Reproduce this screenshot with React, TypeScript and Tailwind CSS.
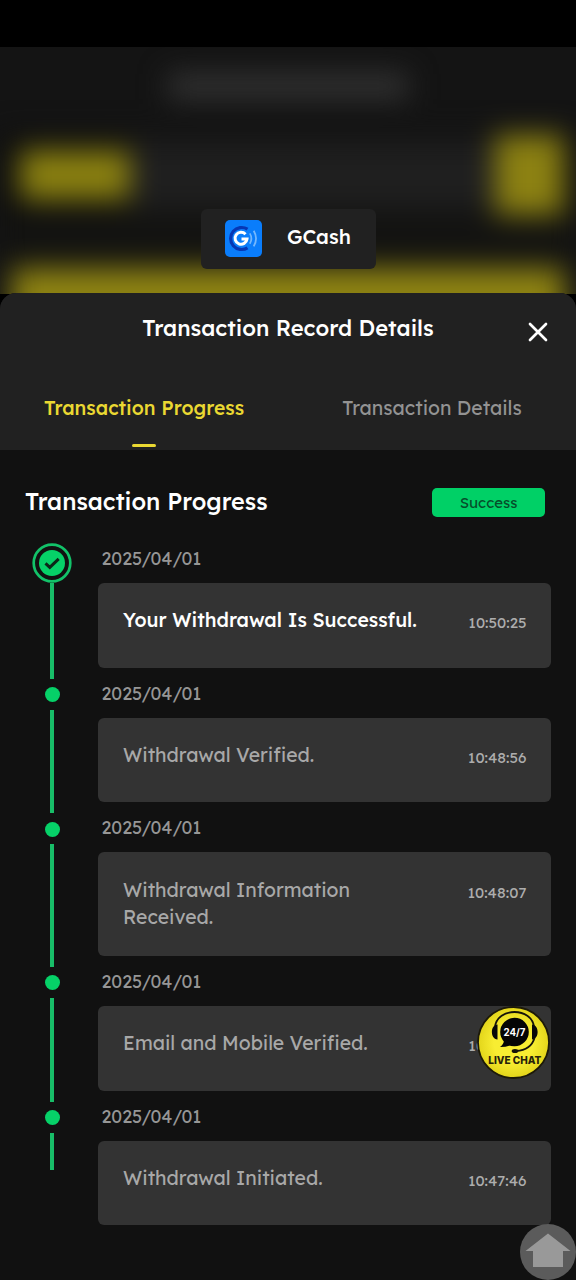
import { clsx } from "clsx";

interface ProgressStep {
  title: string;
  date: string;
  time: string;
}

const steps: ProgressStep[] = [
  { title: "Your Withdrawal Is Successful.", date: "2025/04/01", time: "10:50:25" },
  { title: "Withdrawal Verified.", date: "2025/04/01", time: "10:48:56" },
  { title: "Withdrawal Information Received.", date: "2025/04/01", time: "10:48:07" },
  { title: "Email and Mobile Verified.", date: "2025/04/01", time: "10:47:58" },
  { title: "Withdrawal Initiated.", date: "2025/04/01", time: "10:47:46" },
];

const GCashLogo = () => (
  <svg viewBox="0 0 37 37" className="-mt-[2px] h-[37px] w-[37px]">
    <rect width="37" height="37" rx="5" fill="#0a7dfb" />
    <path d="M22.5 9.2A11 11 0 1 0 22.5 27.8" fill="none" stroke="#0637b5" strokeWidth="3.2" />
    <path d="M20.5 14.2A6 6 0 1 0 22 19H16.5" fill="none" stroke="#fff" strokeWidth="3" />
    <path d="M24.8 13.4Q28 18.5 24.8 23.8" fill="none" stroke="#74b7fd" strokeWidth="1.7" />
    <path d="M28.7 10.8Q33.4 18.5 28.7 26.4" fill="none" stroke="#74b7fd" strokeWidth="1.8" />
  </svg>
);

const Backdrop = () => (
  <div className="h-[247px] overflow-hidden bg-[#141414]">
    <div className="-mx-5 flex h-[310px] flex-col px-5 blur-[14px]">
      <div className="flex h-[86px] items-center justify-center">
        <div className="-mt-2 h-[26px] w-[240px] bg-[#323232]" />
      </div>
      <div className="flex h-[84px] items-center bg-[#0e0e0e] pr-[12px] pl-[20px]">
        <div className="h-[50px] w-[110px] bg-[#8a8010]" />
        <div className="h-[70px] flex-1 bg-[#1f1f1f]" />
        <div className="h-[80px] w-[69px] bg-[#8c8112]" />
      </div>
      <div className="h-[51px] bg-[#131311]" />
      <div className="mx-[12px] h-[89px] bg-[#8e8312]" />
    </div>
  </div>
);

const StepMarker = ({ first, last }: { first: boolean; last: boolean }) => (
  <div className="flex w-10 shrink-0 flex-col items-center">
    {first ? (
      <svg viewBox="0 0 40 40" className="h-10 w-10 shrink-0">
        <circle cx="20" cy="20" r="18.3" fill="none" stroke="#12c269" strokeWidth="2.7" />
        <circle cx="20" cy="20" r="13" fill="#06d168" />
        <path d="M13.5 20.3L17.8 24.4L26.7 15.800" fill="none" stroke="#0b2718" strokeWidth="3" />
      </svg>
    ) : (
      <div className="flex h-[32px] shrink-0 items-center pt-[2px]">
        <div className="h-[15px] w-[15px] rounded-full bg-[#06d168]" />
      </div>
    )}
    <div className={clsx("w-[3.5px] bg-[#18bd68]", last ? "h-[37px]" : "-mb-px flex-1")} />
  </div>
);

const StepRow = ({ step, first, last }: { step: ProgressStep; first: boolean; last: boolean }) => (
  <li className="flex">
    <StepMarker first={first} last={last} />
    <div className="ml-[26px] flex-1 pb-[10px]">
      <p className="h-10 pl-[3.5px] text-[17.9px] leading-[30px] text-[#969696]">{step.date}</p>
      <div className="flex min-h-[84.7px] justify-between rounded-md bg-[#333333] px-[25px] pt-[24.2px] pb-[24.8px]">
        <p
          className={clsx(
            "text-[19.35px] leading-[27.3px]",
            first ? "w-[310px] font-medium text-white" : "w-[260px] text-[#a8a8a8]"
          )}
        >
          {step.title}
        </p>
        <span className="-mr-[0.5px] text-[15.1px] leading-[31px] whitespace-nowrap text-[#adadad]">{step.time}</span>
      </div>
    </div>
  </li>
);

const LiveChat = () => (
  <button className="absolute top-[1006px] left-[477px] h-[73px] w-[73px]">
    <svg viewBox="0 0 73 73" className="h-full w-full font-['Inter',sans-serif]">
      <defs>
        <radialGradient id="chat">
          <stop offset="0.55" stopColor="#f8ed32" />
          <stop offset="1" stopColor="#e3d51a" />
        </radialGradient>
      </defs>
      <circle cx="36.5" cy="36.5" r="35.5" fill="url(#chat)" stroke="#1d1a08" strokeWidth="1.8" />
      <path d="M18 21C20 1 55 1 57 21" fill="none" stroke="#15130a" strokeWidth="1.8" />
      <path d="M20.5 18.500C13 19 13 33 20.500 33.500Z M55 18.500C62.500 19 62.500 33 55 33.500Z" fill="#080808" />
      <circle cx="37.5" cy="26" r="14.3" fill="#050505" />
      <path d="M24 29L27 34Q27 38 23 41Q31 41 36 38Z" fill="#050505" />
      <path d="M57.500 32Q54 44 39 45" fill="none" stroke="#15130a" strokeWidth="1.8" />
      <ellipse cx="38" cy="45" rx="3.3" ry="2" fill="#15130a" />
      <text x="37.500" y="29.700" textAnchor="middle" fill="#fff" fontSize="10" fontWeight="700" textLength="22" lengthAdjust="spacingAndGlyphs">24/7</text>
      <text x="37.800" y="57.600" textAnchor="middle" fill="#26220a" fontSize="10.500" fontWeight="800" textLength="53" lengthAdjust="spacingAndGlyphs">LIVE CHAT</text>
    </svg>
  </button>
);

export default function App() {
  return (
    <main className="relative h-[1280px] w-[576px] overflow-hidden bg-black pt-[47px] font-['Lexend','Inter',sans-serif]">
      <Backdrop />
      <div className="absolute top-[209px] left-[201px] flex h-[60px] w-[175px] items-center rounded-md bg-[#212121] pl-6">
        <GCashLogo />
        <span className="ml-[25px] pb-[4px] text-[20px] font-medium text-white">GCash</span>
      </div>

      <section className="relative -mt-px h-[987px] rounded-t-2xl bg-[#111111]">
        <header className="h-[157px] rounded-t-2xl bg-[#212121]">
          <div className="flex h-[77px] items-start justify-between pt-5 pr-[28px] pl-[48px]">
            <h1 className="flex-1 text-center text-[22px] leading-[30px] font-medium text-white">
              Transaction Record Details
            </h1>
            <svg viewBox="0 0 20 20" className="mt-[9px] h-5 w-5">
              <path d="M2 2L18 18M18 2L2 18" stroke="#fff" strokeWidth="2.7" strokeLinecap="round" />
            </svg>
          </div>
          <nav className="flex h-20 text-[19.35px] leading-[30px]">
            <button className="flex w-1/2 flex-col items-center pt-[23px] font-medium text-[#ead832]">
              Transaction Progress
              <span className="mt-[21px] h-[3px] w-6 rounded-full bg-[#ead832]" />
            </button>
            <button className="flex w-1/2 flex-col items-center pt-[23px] text-[#939393]">Transaction Details</button>
          </nav>
        </header>

        <div className="flex h-[93px] items-start justify-between pt-[38px] pr-[31px] pl-[25px]">
          <h2 className="-mt-px text-[23.45px] leading-[30px] font-medium text-white">Transaction Progress</h2>
          <span className="flex h-[29px] w-[113px] items-center justify-center rounded-[5px] bg-[#00d066] pt-px text-[15px] text-[#064d2a]">
            Success
          </span>
        </div>
        <ul className="pr-[25px] pl-[32px]">
          {steps.map((step, index) => (
            <StepRow key={step.time} step={step} first={index === 0} last={index === steps.length - 1} />
          ))}
        </ul>
      </section>

      <LiveChat />
      <button className="absolute top-[1224px] left-[520px] h-14 w-14">
        <svg viewBox="0 0 56 56" className="h-full w-full">
          <circle cx="28" cy="28" r="28" fill="#5b5b5b" />
          <path d="M28 9.500L50.500 27H43V43H13V27H5.500Z" fill="#999999" />
        </svg>
      </button>
    </main>
  );
}
